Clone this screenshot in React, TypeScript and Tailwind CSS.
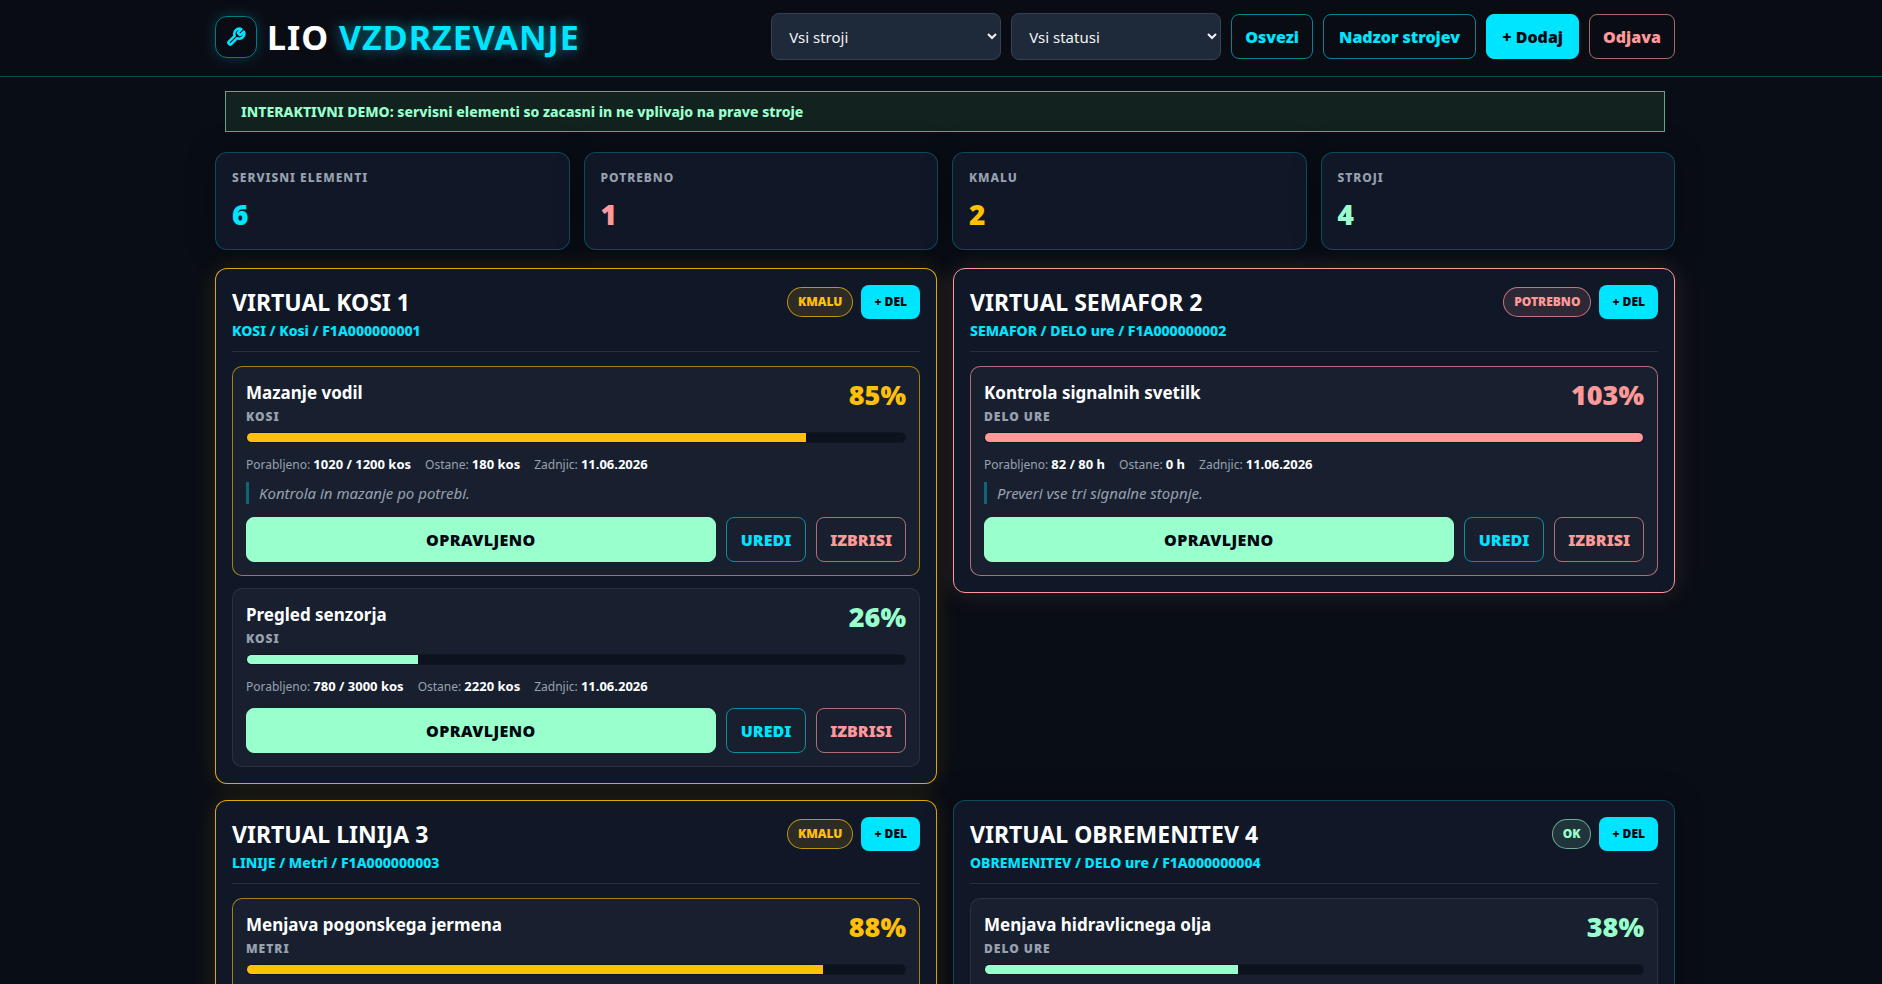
import { clsx } from 'clsx';

type Status = 'ok' | 'soon' | 'due';

interface ServiceItem {
  name: string;
  kind: string;
  used: number;
  limit: number;
  unit: string;
  last: string;
  note?: string;
  status: Status;
}

interface Machine {
  name: string;
  meta: string;
  status: Status;
  items: ServiceItem[];
}

const machines: Machine[] = [
  {
    name: 'VIRTUAL KOSI 1',
    meta: 'KOSI / Kosi / F1A000000001',
    status: 'soon',
    items: [
      {
        name: 'Mazanje vodil',
        kind: 'KOSI',
        used: 1020,
        limit: 1200,
        unit: 'kos',
        last: '11.06.2026',
        note: 'Kontrola in mazanje po potrebi.',
        status: 'soon',
      },
      {
        name: 'Pregled senzorja',
        kind: 'KOSI',
        used: 780,
        limit: 3000,
        unit: 'kos',
        last: '11.06.2026',
        status: 'ok',
      },
    ],
  },
  {
    name: 'VIRTUAL SEMAFOR 2',
    meta: 'SEMAFOR / DELO ure / F1A000000002',
    status: 'due',
    items: [
      {
        name: 'Kontrola signalnih svetilk',
        kind: 'DELO URE',
        used: 82,
        limit: 80,
        unit: 'h',
        last: '11.06.2026',
        note: 'Preveri vse tri signalne stopnje.',
        status: 'due',
      },
    ],
  },
  {
    name: 'VIRTUAL LINIJA 3',
    meta: 'LINIJE / Metri / F1A000000003',
    status: 'soon',
    items: [
      {
        name: 'Menjava pogonskega jermena',
        kind: 'METRI',
        used: 4375,
        limit: 5000,
        unit: 'm',
        last: '11.06.2026',
        status: 'soon',
      },
    ],
  },
  {
    name: 'VIRTUAL OBREMENITEV 4',
    meta: 'OBREMENITEV / DELO ure / F1A000000004',
    status: 'ok',
    items: [
      {
        name: 'Menjava hidravlicnega olja',
        kind: 'DELO URE',
        used: 192,
        limit: 500,
        unit: 'h',
        last: '11.06.2026',
        status: 'ok',
      },
    ],
  },
];

const stats = [
  { label: 'SERVISNI ELEMENTI', value: 6, color: 'text-[#00e5ff]' },
  { label: 'POTREBNO', value: 1, color: 'text-[#ff9999]' },
  { label: 'KMALU', value: 2, color: 'text-[#ffc107]' },
  { label: 'STROJI', value: 4, color: 'text-[#99ffcc]' },
];

const statusLabel: Record<Status, string> = {
  ok: 'OK',
  soon: 'KMALU',
  due: 'POTREBNO',
};

const cardStyle: Record<Status, string> = {
  ok: 'border-[#00e5ff]/25 shadow-[0_0_30px_rgba(0,0,0,0.3)]',
  soon: 'border-[#ffc107]/85 shadow-[0_0_24px_rgba(255,193,7,0.12)]',
  due: 'border-[#ff9999] shadow-[0_0_26px_rgba(255,153,153,0.15)]',
};

const badgeStyle: Record<Status, string> = {
  ok: 'border-[#99ffcc]/60 bg-[#99ffcc]/12 text-[#99ffcc]',
  soon: 'border-[#ffc107]/70 bg-[#ffc107]/12 text-[#ffc107]',
  due: 'border-[#ff9999]/70 bg-[#ff9999]/12 text-[#ff9999]',
};

const itemStyle: Record<Status, string> = {
  ok: 'border-white/8',
  soon: 'border-[#ffc107]/60',
  due: 'border-[#ff9999]/65',
};

const textStyle: Record<Status, string> = {
  ok: 'text-[#99ffcc]',
  soon: 'text-[#ffc107]',
  due: 'text-[#ff9999]',
};

const fillStyle: Record<Status, string> = {
  ok: 'bg-[#99ffcc]',
  soon: 'bg-[#ffc107]',
  due: 'bg-[#ff9999]',
};

const buttonBase = 'h-[45px] rounded-lg border text-base font-black cursor-pointer';
const selectBase =
  'h-[47px] rounded-lg border border-gray-700 bg-gray-800 px-[13px] text-[15px] text-gray-100';

function WrenchIcon() {
  return (
    <svg
      viewBox="0 0 24 24"
      className="h-5 w-5"
      fill="none"
      stroke="currentColor"
      strokeWidth="3"
      strokeLinecap="round"
      strokeLinejoin="round"
      aria-hidden="true"
    >
      <path d="M14.7 6.3a1 1 0 0 0 0 1.4l1.6 1.6a1 1 0 0 0 1.4 0l3.77-3.77a6 6 0 0 1-7.94 7.94l-6.91 6.91a2.12 2.12 0 0 1-3-3l6.91-6.91a6 6 0 0 1 7.94-7.94l-3.76 3.76z" />
    </svg>
  );
}

function Header() {
  return (
    <header className="border-b border-[#00e5ff]/30 bg-[#0a0c14] pl-2">
      <div className="mx-auto flex max-w-[1460px] items-center justify-between pt-[13px] pb-4">
        <div className="flex items-center gap-2.5">
          <div className="flex h-[42px] w-[42px] items-center justify-center rounded-xl border border-[#00e5ff]/50 text-[#00e5ff] shadow-[0_0_14px_rgba(0,229,255,0.2)]">
            <WrenchIcon />
          </div>
          <h1 className="text-[34px] leading-[46px] font-bold tracking-[1px] text-white">
            LIO{' '}
            <span className="text-[#00e5ff] [text-shadow:0_0_14px_rgba(0,229,255,0.55)]">
              VZDRZEVANJE
            </span>
          </h1>
        </div>
        <div className="flex items-center gap-2.5">
          <select aria-label="Stroj" className={clsx(selectBase, 'w-[230px]')}>
            <option>Vsi stroji</option>
          </select>
          <select aria-label="Status" className={clsx(selectBase, 'w-[210px]')}>
            <option>Vsi statusi</option>
          </select>
          <button className={clsx(buttonBase, 'border-[#00e5ff]/55 px-[13px] text-[#00e5ff]')}>
            Osvezi
          </button>
          <button className={clsx(buttonBase, 'border-[#00e5ff]/55 px-[15px] text-[#00e5ff]')}>
            Nadzor strojev
          </button>
          <button className={clsx(buttonBase, 'border-[#00e5ff] bg-[#00e5ff] px-[15px] text-[#030712]')}>
            + Dodaj
          </button>
          <button className={clsx(buttonBase, 'border-[#ff9999]/65 px-[13px] text-[#ff9999]')}>
            Odjava
          </button>
        </div>
      </div>
    </header>
  );
}

function ItemCard({ item }: { item: ServiceItem }) {
  const percent = (item.used * 100) / item.limit;
  const left = Math.max(item.limit - item.used, 0);
  const details = [
    { label: 'Porabljeno:', value: `${item.used} / ${item.limit} ${item.unit}` },
    { label: 'Ostane:', value: `${left} ${item.unit}` },
    { label: 'Zadnjic:', value: item.last },
  ];

  return (
    <article className={clsx('rounded-[10px] border bg-white/[0.035] p-[13px]', itemStyle[item.status])}>
      <div className="flex items-start justify-between">
        <div>
          <h3 className="text-[17px] leading-[26px] font-bold text-white">{item.name}</h3>
          <p className="mt-0.5 text-xs leading-[18px] font-black tracking-[1px] text-gray-400">
            {item.kind}
          </p>
        </div>
        <div className={clsx('text-[27px] leading-[30px] font-black', textStyle[item.status])}>
          {Math.round(percent)}%
        </div>
      </div>
      <div className="mt-1.5 h-[11px] overflow-hidden rounded-full border border-white/[0.02] bg-[#0c121e]">
        <div
          className={clsx('h-full', fillStyle[item.status])}
          style={{ width: `${Math.min(percent, 100)}%` }}
        />
      </div>
      <div className="mt-[13px] flex flex-wrap gap-x-3.5 text-xs leading-[18px] text-gray-400">
        {details.map((detail) => (
          <span key={detail.label}>
            {detail.label}{' '}
            <strong className="text-[13px] leading-none font-bold text-white">{detail.value}</strong>
          </span>
        ))}
      </div>
      {item.note && (
        <p className="mt-2 border-l-3 border-[#00e5ff]/35 pl-2.5 text-[15px] leading-[22px] text-gray-400 italic">
          {item.note}
        </p>
      )}
      <div className={clsx('flex gap-2.5', item.note ? 'mt-[13px]' : 'mt-3')}>
        <button
          className={clsx(buttonBase, 'flex-1 border-[#99ffcc] bg-[#99ffcc] tracking-wide text-[#030712]')}
        >
          OPRAVLJENO
        </button>
        <button className={clsx(buttonBase, 'border-[#00e5ff]/55 px-[14px] text-[#00e5ff]')}>
          UREDI
        </button>
        <button className={clsx(buttonBase, 'border-[#ff9999]/65 px-[13px] text-[#ff9999]')}>
          IZBRISI
        </button>
      </div>
    </article>
  );
}

function MachineCard({ machine }: { machine: Machine }) {
  return (
    <section className={clsx('rounded-xl border bg-gray-900 p-4', cardStyle[machine.status])}>
      <div className="flex items-start justify-between border-b border-white/10 pb-2.5">
        <div>
          <h2 className="text-[23px] leading-[34px] font-bold text-white">{machine.name}</h2>
          <p className="mt-0.5 text-sm leading-5 font-extrabold text-[#00e5ff]">{machine.meta}</p>
        </div>
        <div className="flex items-center gap-2">
          <span
            className={clsx(
              'rounded-full border px-2.5 text-xs leading-7 font-black',
              badgeStyle[machine.status],
            )}
          >
            {statusLabel[machine.status]}
          </span>
          <button className="h-[34px] cursor-pointer rounded-lg bg-[#00e5ff] px-[13px] text-xs font-black text-[#030712]">
            + DEL
          </button>
        </div>
      </div>
      <div className="mt-3.5 flex flex-col gap-3">
        {machine.items.map((item) => (
          <ItemCard key={item.name} item={item} />
        ))}
      </div>
    </section>
  );
}

export default function App() {
  return (
    <div className='min-h-screen bg-[#090d15] pb-6 font-["Noto_Sans","Open_Sans",sans-serif]'>
      <Header />
      <main className="pl-2">
        <div className="mx-auto max-w-[1460px] pt-3.5">
          <div className="mx-2.5 border border-[#99ffcc]/60 bg-[#11221f] px-[15px] py-2.5 text-sm leading-[19px] font-extrabold text-[#99ffcc]">
            INTERAKTIVNI DEMO: servisni elementi so zacasni in ne vplivajo na prave stroje
          </div>
          <div className="mt-5 grid grid-cols-4 gap-3.5">
            {stats.map((stat) => (
              <div
                key={stat.label}
                className="rounded-xl border border-[#00e5ff]/25 bg-gray-900 p-4 shadow-[0_0_30px_rgba(0,0,0,0.3)]"
              >
                <div className="text-xs leading-[18px] font-extrabold tracking-[1px] text-gray-400">
                  {stat.label}
                </div>
                <div className={clsx('mt-2 text-[28px] leading-[38px] font-black', stat.color)}>
                  {stat.value}
                </div>
              </div>
            ))}
          </div>
          <div className="mt-[18px] grid grid-cols-2 items-start gap-4">
            {machines.map((machine) => (
              <MachineCard key={machine.name} machine={machine} />
            ))}
          </div>
        </div>
      </main>
    </div>
  );
}
